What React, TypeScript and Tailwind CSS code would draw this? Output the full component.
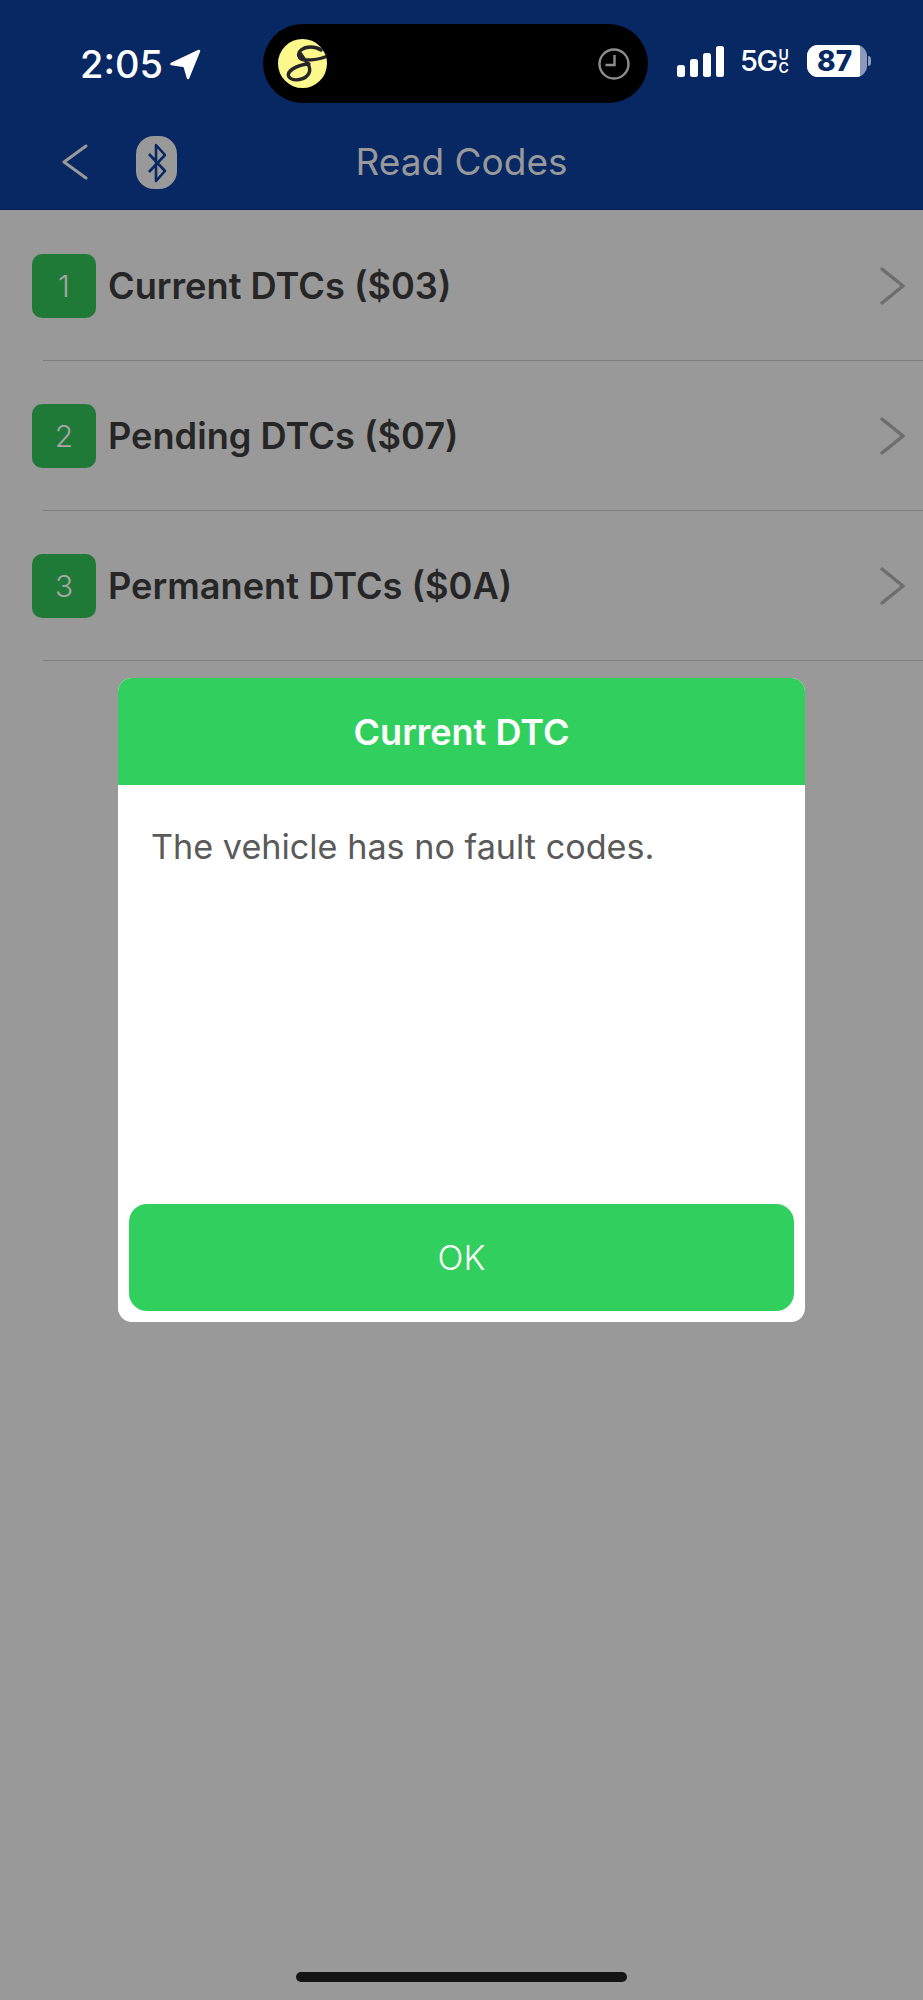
const FONT = 'font-["Inter","Liberation_Sans",sans-serif]';

const ROWS = [
  { id: 1, label: 'Current DTCs ($03)' },
  { id: 2, label: 'Pending DTCs ($07)' },
  { id: 3, label: 'Permanent DTCs ($0A)' },
];

function LocationArrow() {
  return (
    <svg width="31" height="31" viewBox="0 0 31 31" className="ml-[7px]">
      <path d="M1.5 15 L29 2 L18 29 L14.5 17 Z" fill="#fff" stroke="#fff" strokeWidth="2.5" strokeLinejoin="round" />
    </svg>
  );
}

function AppBadge() {
  return (
    <svg width="49" height="49" viewBox="0 0 49 49">
      <circle cx="24.5" cy="24.5" r="24.5" fill="#fdf88c" />
      <path
        d="M47 18 C40 21 33 21 27 21 C20 21 19 14 23 11 C28 7 37 7 43 11 M22 14 C27 22 34 27 31 34 C28 41 15 43 11 38 C8 33 17 26 31 25"
        fill="none"
        stroke="#26262a"
        strokeWidth="3.4"
        strokeLinecap="round"
      />
    </svg>
  );
}

function StatusBar() {
  return (
    <div className="flex h-[127px] items-start">
      <div className="ml-[80px] mt-[42px] flex w-[183px] items-center">
        <span className="text-[38px] leading-[44px] font-medium text-white">2:05</span>
        <LocationArrow />
      </div>
      <div className="mt-[24px] flex h-[79px] w-[385px] items-center justify-between rounded-[40px] bg-black pl-[15px] pr-[18px]">
        <AppBadge />
        <svg width="32" height="32" viewBox="0 0 32 32" fill="none" stroke="#8e8e8e" strokeWidth="2.4">
          <circle cx="16" cy="16" r="14.5" />
          <path d="M16.5 7 V17 H7.5" />
        </svg>
      </div>
      <div className="ml-[29px] mt-[45px] flex items-center">
        <svg width="47" height="31" viewBox="0 0 47 31" fill="#fff">
          <rect x="0" y="19" width="8" height="12" rx="2.5" />
          <rect x="13" y="13" width="8" height="18" rx="2.5" />
          <rect x="26" y="7" width="8" height="24" rx="2.5" />
          <rect x="39" y="0" width="8" height="31" rx="2.5" />
        </svg>
        <span className="ml-[16px] text-[29px] leading-[32px] font-medium tracking-[-1.5px] text-white">5G</span>
        <span className="ml-[2px] flex w-[12px] flex-col text-[14px] leading-[13px] font-semibold text-white">
          <span>U</span>
          <span>C</span>
        </span>
        <div className="ml-[16px] flex items-center">
          <div className="flex h-[32px] w-[60px] overflow-hidden rounded-[11px] bg-[#8b9ab8]">
            <div className="flex w-[53px] items-center justify-center bg-white pl-[3px] text-[28px] leading-none font-extrabold text-[#072863]">
              87
            </div>
          </div>
          <div className="ml-[1px] h-[10px] w-[3px] rounded-r-sm bg-[#8b9ab8]" />
        </div>
      </div>
    </div>
  );
}

function NavBar() {
  return (
    <div className="relative flex h-[83px] items-start border-b border-[#05214f]">
      <svg width="26" height="36" viewBox="0 0 26 36" fill="none" stroke="#999" strokeWidth="3" strokeLinecap="round" strokeLinejoin="round" className="ml-[62px] mt-[17px]">
        <path d="M24 2 L2 18 L24 34" />
      </svg>
      <div className="ml-[48px] mt-[9px] flex h-[53px] w-[41px] items-center justify-center rounded-[18px] bg-[#999]">
        <svg width="22" height="42" viewBox="0 0 22 42" fill="none" stroke="#072863" strokeWidth="2.6" strokeLinejoin="round">
          <path d="M3 12 L19 29 L10 39 V3 L19 13 L3 30" />
        </svg>
      </div>
      <span className="absolute inset-x-0 top-[15px] text-center text-[37px] leading-[40px] text-[#999]">Read Codes</span>
    </div>
  );
}

function CodeRow({ id, label }: { id: number; label: string }) {
  return (
    <div className="relative flex h-[150px] items-center pl-[32px] pr-[18px]">
      <div className="flex h-[64px] w-[64px] items-center justify-center rounded-[10px] bg-[#1f7a38] text-[30px] font-light text-[#a8a8a8]">
        {id}
      </div>
      <span className="ml-[12px] flex-1 text-[36.2px] font-semibold text-[#262626]">{label}</span>
      <svg width="25" height="38" viewBox="0 0 25 38" fill="none" stroke="#6e6e6e" strokeWidth="3.5" strokeLinecap="round" strokeLinejoin="round">
        <path d="M2 2 L23 19 L2 36" />
      </svg>
      <div className="absolute bottom-0 left-[43px] right-0 h-px bg-[#7f7f7f]" />
    </div>
  );
}

export default function App() {
  return (
    <div className={`relative h-[2000px] w-[923px] overflow-hidden bg-[#999] ${FONT}`}>
      <header className="bg-[#072863]">
        <StatusBar />
        <NavBar />
      </header>

      <main className="pt-px">
        {ROWS.map((r) => (
          <CodeRow key={r.id} id={r.id} label={r.label} />
        ))}
      </main>

      {/* Dialog */}
      <div className="absolute left-[118px] top-[678px] flex h-[644px] w-[687px] flex-col overflow-hidden rounded-[14px] bg-white">
        <div className="flex h-[107px] items-center justify-center bg-[#31d05e] text-[36px] font-semibold text-white">
          Current DTC
        </div>
        <p className="flex-1 px-[33px] pt-[40px] text-[34.2px] leading-[44px] text-[#5a5a5a]">The vehicle has no fault codes.</p>
        <button className="mx-[11px] mb-[11px] flex h-[107px] items-center justify-center rounded-[18px] bg-[#31d05e] text-[34px] font-light text-white">
          OK
        </button>
      </div>

      <div className="absolute bottom-[18px] left-[296px] h-[10px] w-[331px] rounded-full bg-[#141414]" />
    </div>
  );
}
